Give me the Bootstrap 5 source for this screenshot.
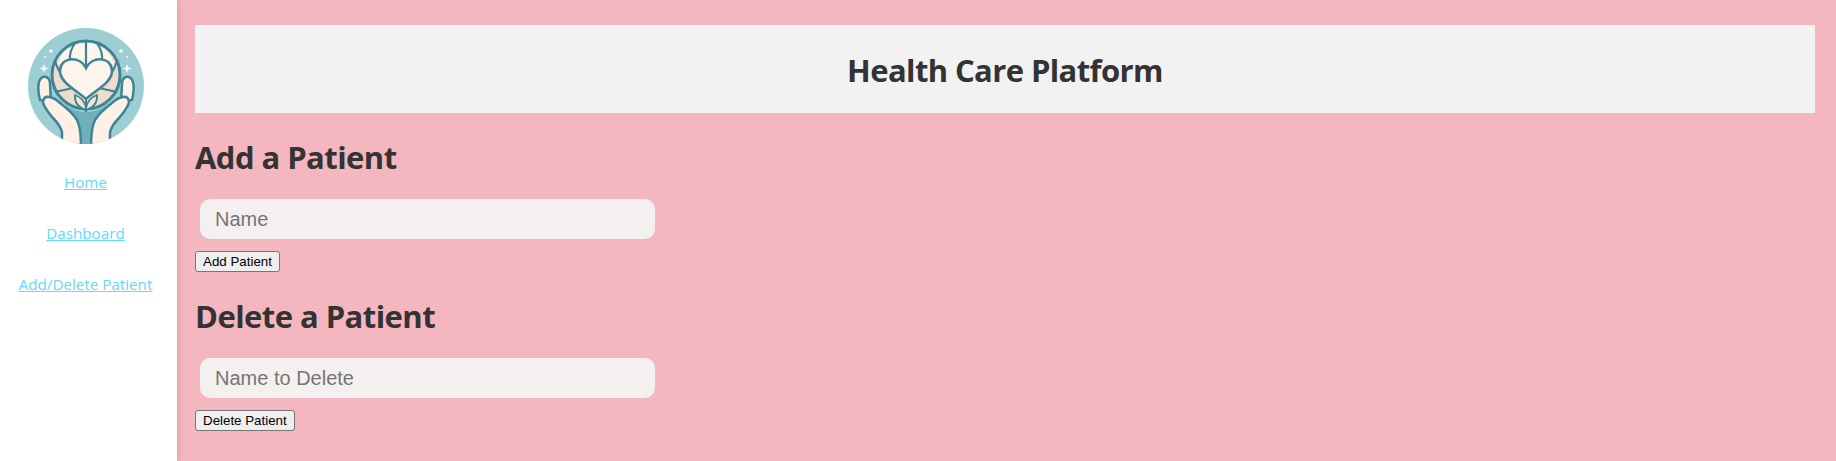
<!DOCTYPE html>
<html>
<head>
    <title>Health Care Platform</title>
    <link href="https://cdn.jsdelivr.net/npm/bootstrap@5.3.0/dist/css/bootstrap.min.css" rel="stylesheet">
    <style>
        html, body { height: 100%; }
        body { font-family: "Open Sans", "Noto Sans", sans-serif; background: #f4b6bf; color: #333; overflow: hidden; }
        .side-bar { width: 177px; height: 461px; background: #fff; box-shadow: 2px 0 5px rgba(0,0,0,.1); padding: 28px 6px 0 0; }
        .side-logo { width: 116px; height: 116px; display: block; filter: blur(.4px); }
        .side-link { color: #61dafb; font-size: 15.2px; line-height: 21px; }
        .side-link:hover { color: #61dafb; }
        .side-links { margin-top: 28px; gap: 30px; }
        .page-main { padding: 25px 21px 0 18px; }
        .page-head { background: #f2f2f2; height: 88px; padding-top: 4px; }
        .page-head h1 { font-size: 31px; letter-spacing: -.6px; font-weight: 700; margin: 0; color: #333; }
        .sect-title { font-size: 31px; letter-spacing: -.55px; font-weight: 700; color: #333; line-height: 44px; margin: 22px 0 0; }
        .name-input { display: block; width: 455px; height: 40px; margin: 20px 0 0 5px; padding: 0 15px; background: #f5f0f0; border: 0; border-radius: 10px; font-family: "Liberation Sans", Arial, sans-serif; font-size: 20px; outline: 0; }
        .name-input::placeholder { color: #757575; opacity: 1; }
        .plain-btn { display: block; height: 21px; padding: 0 7px; font-family: "Liberation Sans", Arial, sans-serif; font-size: 13.33px; line-height: 17px; color: #000; background: #efefef; border: 1px solid #767676; border-radius: 3px; margin-top: 12px; }
    </style>
</head>
<body>
    <div class="d-flex">
        <aside class="side-bar flex-shrink-0 d-flex flex-column align-items-center">
            <svg class="side-logo" viewBox="0 0 116 116" role="img" aria-label="Health care logo">
                <defs>
                    <clipPath id="logoClip"><circle cx="58" cy="58" r="58"/></clipPath>
                    <g id="logoHand">
                        <path d="M12 72 C10 64 10 58 11 54 Q13 48 18 49 Q22 50 22 56 L23 74Z" fill="#fdf1e6" stroke="#3f8496" stroke-width="2.5"/>
                        <path d="M15 75 Q15 68 21 69 Q27 70 32 75 Q44 84 49 92 Q53 100 53 118 L34 118 L34 104 Q32 97 25 90 Q18 82 15 75Z" fill="#fdf1e6" stroke="#3f8496" stroke-width="2.5"/>
                    </g>
                </defs>
                <g clip-path="url(#logoClip)">
                    <rect width="116" height="116" fill="#9dced3"/>
                    <path d="M38 78 Q58 90 78 78 L70 116 L46 116Z" fill="#6fb0bd"/>
                    <circle cx="58" cy="47" r="34" fill="#efdccb"/>
                    <path d="M34 26 Q58 2 82 26 L86 36 L30 36Z" fill="#fdf6ee"/>
                    <path d="M58 13V38M47 15Q41 24 42 32M69 15Q75 24 74 32M27 33Q30 42 32 44M89 33Q86 42 84 44M27 64L45 60M89 64L71 60" fill="none" stroke="#3f8496" stroke-width="2.2"/>
                    <circle cx="58" cy="47" r="34" fill="none" stroke="#3f8496" stroke-width="3"/>
                    <path d="M58 40 C52 28 34 28 32 42 C31 54 48 62 58 71 C68 62 85 54 84 42 C82 28 64 28 58 40Z" fill="#fdf5ec" stroke="#3f8496" stroke-width="2.6"/>
                    <path d="M58 82 Q46 78 47 67 Q56 70 58 80 Q60 70 69 67 Q70 78 58 82Z" fill="#f4e4d4" stroke="#3f8496" stroke-width="1.8"/>
                    <path d="M58 71V84" stroke="#3f8496" stroke-width="2"/>
                    <use href="#logoHand"/>
                    <use href="#logoHand" transform="matrix(-1 0 0 1 116 0)"/>
                    <g fill="#f4fafa"><circle cx="23" cy="23" r="1.8"/><circle cx="93" cy="23" r="1.8"/><circle cx="17" cy="29" r="1"/><circle cx="99" cy="29" r="1"/><path d="M16 36l1.2 3.3 3.3 1.2-3.3 1.2-1.2 3.3-1.2-3.3-3.3-1.2 3.3-1.2Z"/><path d="M99 36l1.2 3.3 3.3 1.2-3.3 1.2-1.2 3.3-1.2-3.3-3.3-1.2 3.3-1.2Z"/></g>
                </g>
            </svg>
            <nav class="side-links d-flex flex-column align-items-center">
                <a class="side-link" href="#">Home</a>
                <a class="side-link" href="#">Dashboard</a>
                <a class="side-link" href="#">Add/Delete Patient</a>
            </nav>
        </aside>
        <main class="page-main flex-grow-1">
            <header class="page-head d-flex align-items-center justify-content-center">
                <h1>Health Care Platform</h1>
            </header>
            <h2 class="sect-title">Add a Patient</h2>
            <input class="name-input" type="text" placeholder="Name">
            <button class="plain-btn" type="button">Add Patient</button>
            <h2 class="sect-title">Delete a Patient</h2>
            <input class="name-input" type="text" placeholder="Name to Delete">
            <button class="plain-btn" type="button">Delete Patient</button>
        </main>
    </div>
    <script src="https://cdn.jsdelivr.net/npm/bootstrap@5.3.0/dist/js/bootstrap.bundle.min.js"></script>
</body>
</html>
